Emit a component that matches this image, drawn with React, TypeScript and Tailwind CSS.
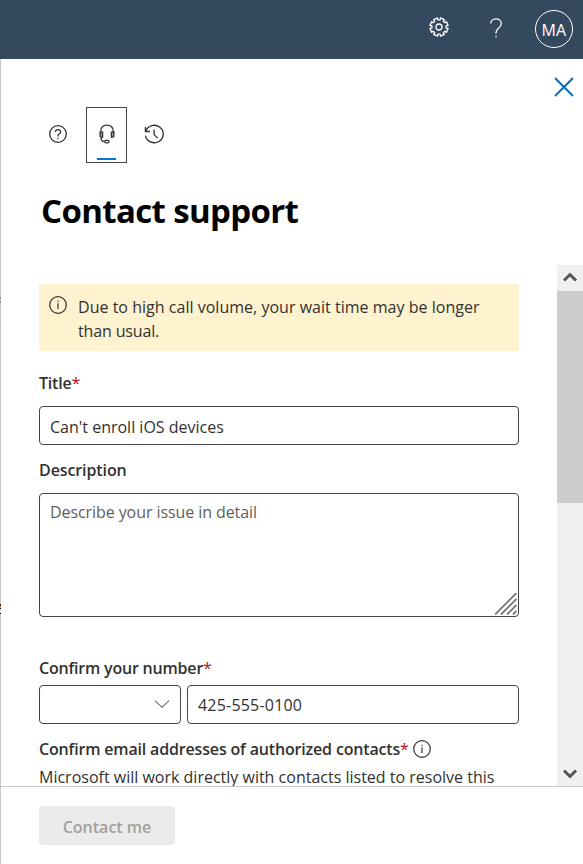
import React from "react";

const gearPoints = Array.from({ length: 8 }, (_, i) => {
  const a = (i * Math.PI) / 4 + Math.PI / 8;
  return [
    [-0.23, 7.2],
    [-0.23, 9.2],
    [0.23, 9.2],
    [0.23, 7.2],
  ]
    .map(([d, r]) => `${(10 + r * Math.cos(a + d)).toFixed(2)},${(10 + r * Math.sin(a + d)).toFixed(2)}`)
    .join(" ");
}).join(" ");

function GearIcon() {
  return (
    <svg className="block h-5 w-5" viewBox="0 0 20 20" fill="none" stroke="currentColor" strokeWidth="1.3" strokeLinejoin="round">
      <polygon points={gearPoints} />
      <circle cx="10" cy="10" r="3" />
    </svg>
  );
}

function HelpMark() {
  return (
    <svg className="block h-5 w-3" viewBox="0 0 12 20" fill="none" stroke="currentColor" strokeWidth="1.25">
      <path d="M.7 5.6C.7 2.8 2.9.8 6 .8s5.3 2 5.3 4.7c0 2.3-1.3 3.5-2.8 4.8C7 11.600 6 12.500 6 14.500v1" />
      <path d="M6 17.800v1.400" />
    </svg>
  );
}

function InfoIcon() {
  return (
    <svg className="block h-[18px] w-[18px] shrink-0" viewBox="0 0 18 18" fill="none" stroke="currentColor" strokeWidth="1.2">
      <circle cx="9" cy="9" r="8.3" />
      <path d="M9 7.300v5.700M9 4.700v1.300" />
    </svg>
  );
}

function HelpCircle() {
  return (
    <svg className="block h-[18px] w-[18px]" viewBox="0 0 18 18" fill="none" stroke="currentColor" strokeWidth="1.3">
      <circle cx="9" cy="9" r="8.300" />
      <path d="M6.400 7.100C6.400 5.500 7.500 4.600 9 4.600s2.600.9 2.600 2.300c0 1.800-2.600 2.100-2.600 4v.6M9 12.700V14" />
    </svg>
  );
}

function Headset() {
  return (
    <svg className="block h-5 w-4" viewBox="0 0 16 20" fill="none" stroke="currentColor" strokeWidth="1.3">
      <path d="M1.700 8V7.200C1.700 3.500 4.200 1.100 8 1.100s6.300 2.400 6.300 6.100V8" />
      <path d="M1.100 8.100h2.500v5H2.100a1 1 0 0 1-1-1zM14.900 8.100h-2.500v5h1.500a1 1 0 0 0 1-1z" fill="#a3a3a3" />
      <path d="M2.200 13.100v1.500c0 1.900 1.300 3 3.300 3" />
      <rect x="5.700" y="16.300" width="4.300" height="2.500" rx="1.200" />
    </svg>
  );
}

function HistoryIcon() {
  return (
    <svg className="block h-5 w-5" viewBox="0 0 20 20" fill="none" stroke="currentColor" strokeWidth="1.300">
      <path d="M1.400 2.900v4.600h4.600M1.700 7.300A9 8.700 0 1 1 1.400 11.600" />
      <path d="M10.100 5.400v5.200l3.500 3.500" />
    </svg>
  );
}

const label = "block h-6 whitespace-nowrap text-base leading-6 font-semibold";

function Required() {
  return <span className="font-normal text-[#b10e1c]">*</span>;
}

// One-pixel sliver of the page that lies behind the panel.
function PageEdge() {
  return (
    <div className="flex w-px shrink-0 flex-col bg-[#c8c8c8]">
      <i className="mt-[238px] h-0.5 bg-[#8a8a8a]" />
      <i className="mt-0.5 h-0.5 bg-[#8a8a8a]" />
      <i className="mt-[21px] h-px bg-[#aaa]" />
      <i className="mt-[279px] h-0.5 bg-[#1b1b4b]" />
      <i className="h-0.5 bg-[#d59a2c]" />
      <i className="h-px bg-black" />
      <i className="h-1 bg-[#e3e3d8]" />
      <i className="h-px bg-black" />
    </div>
  );
}

export default function App() {
  return (
    <div className="flex h-[864px] w-[583px] flex-col overflow-hidden bg-white font-['Open_Sans','Noto_Sans',sans-serif] text-[#323130]">
      <header className="flex h-[59px] shrink-0 items-start justify-end bg-[#34495e] pr-2.5 text-white">
        <div className="mt-[17px] mr-[41px]"><GearIcon /></div>
        <div className="mt-[18px] mr-[33px]"><HelpMark /></div>
        <div className="mt-2.5 flex h-[38px] w-[38px] items-center justify-center rounded-full border border-white text-base tracking-[0.200px]">
          <span className="pt-0.5">MA</span>
        </div>
      </header>

      <div className="flex min-h-0 flex-1">
        <PageEdge />
        <main className="flex min-w-0 flex-1 flex-col">
          <div className="flex h-12 shrink-0 justify-end pt-[18px] pr-[9px]">
            <svg className="block h-5 w-5" viewBox="0 0 20 20" stroke="#006dbe" strokeWidth="1.900" fill="none">
              <path d="M1 1l18 18M19 1L1 19" />
            </svg>
          </div>
          <nav className="flex h-14 shrink-0 pl-12">
            <div className="mt-[18px] w-[37px]"><HelpCircle /></div>
            <div className="flex w-[41px] flex-col items-center border border-[#444] pt-4">
              <Headset />
              <div className="mt-[14px] h-0.5 w-[19px] bg-[#0078d4]" />
            </div>
            <div className="mt-[17px] ml-[17px]"><HistoryIcon /></div>
          </nav>
          <h1 className="mt-[24px] ml-10 h-12 shrink-0 whitespace-nowrap text-[33px] leading-[48px] font-bold tracking-[-0.640px] text-black">Contact support</h1>

          <div className="mt-[30px] flex h-[521px] shrink-0 overflow-hidden">
            <section className="w-[556px] pt-[19px] pl-[38px]">
              <div className="flex h-[67px] w-[480px] bg-[#fff2cf] pt-3 pl-2.5">
                <InfoIcon />
                <p className="-mt-px ml-[11px] whitespace-nowrap text-base leading-6">
                  <span className="block tracking-[0.020px]">Due to high call volume, your wait time may be longer</span>
                  <span className="block tracking-[-0.150px]">than usual.</span>
                </p>
              </div>
              <label className={`${label} mt-5 tracking-[-0.200px]`}>Title<Required /></label>
              <div className="mt-[11px] flex h-[39px] w-[480px] items-center rounded-sm border border-[#444] px-2.5 pt-0.5 text-base">Can&apos;t enroll iOS devices</div>
              <label className={`${label} mt-[13px] tracking-[-0.100px]`}>Description</label>
              <div className="mt-[11px] flex h-[124px] w-[480px] justify-between rounded-sm border border-[#444] pt-1.5 pr-px pb-px pl-2.5 text-base leading-6 text-[#605e5c]">
                <span className="tracking-[-0.080px]">Describe your issue in detail</span>
                <svg className="block h-[22px] w-[22px] self-end" viewBox="0 0 22 22" stroke="#777" strokeWidth="1.900" fill="none">
                  <path d="M0 21.500L21.500 0M6 21.500L21.500 6M12 21.500L21.500 12M18 21.500L21.500 18" />
                </svg>
              </div>
              <label className={`${label} mt-[39px] tracking-[-0.200px]`}>Confirm your number<Required /></label>
              <div className="mt-[5px] flex gap-1.5">
                <div className="flex h-[39px] w-[142px] items-center justify-end rounded-sm border border-[#444] pr-2.5 pb-0.5">
                  <svg className="block h-2 w-4" viewBox="0 0 16 8" fill="none" stroke="currentColor" strokeWidth="1"><path d="M1 .7l7 6.600L15 .7" /></svg>
                </div>
                <div className="flex h-[39px] w-[332px] items-center rounded-sm border border-[#444] px-2.5 text-base tracking-[0.200px]">425-555-0100</div>
              </div>
              <div className="mt-[13px] flex items-center gap-1">
                <label className={`${label} tracking-[-0.170px]`}>Confirm email addresses of authorized contacts<Required /></label>
                <InfoIcon />
              </div>
              <p className="mt-1 whitespace-nowrap text-base leading-6">Microsoft will work directly with contacts listed to resolve this</p>
            </section>
            <aside className="flex w-[26px] shrink-0 flex-col bg-[#f0f0f0]">
              <div className="flex h-[26px] items-center justify-center pb-0.5">
                <svg className="block h-2.5 w-3.5" viewBox="0 0 14 10" fill="none" stroke="#555" strokeWidth="3"><path d="M1 8.500l6-6 6 6" /></svg>
              </div>
              <div className="h-[212px] bg-[#cdcdcd]" />
              <div className="mt-auto flex h-[26px] items-center justify-center pt-0.5">
                <svg className="block h-2.5 w-3.5" viewBox="0 0 14 10" fill="none" stroke="#555" strokeWidth="3"><path d="M1 1.500l6 6 6-6" /></svg>
              </div>
            </aside>
          </div>
          <footer className="flex-1 border-t border-[#c8c8c8] pt-[19px] pl-[38px]">
            <button className="flex h-[39px] w-[136px] items-center justify-center rounded-sm bg-[#ebebeb] pt-0.5 text-base font-semibold text-[#a19f9d]">Contact me</button>
          </footer>
        </main>
      </div>
    </div>
  );
}
